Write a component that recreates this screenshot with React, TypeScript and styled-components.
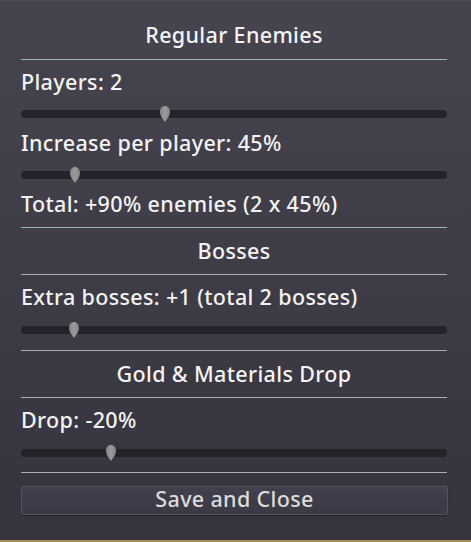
import React, { FunctionComponent } from 'react';
import styled, { createGlobalStyle } from 'styled-components';

const GlobalStyle = createGlobalStyle`
  html, body {
    margin: 0;
    padding: 0;
    background: #a68e63;
  }
  body {
    width: 471px;
    height: 542px;
    overflow: hidden;
    font-family: 'Noto Sans', 'DejaVu Sans', sans-serif;
  }
`;

const Panel = styled.div`
  width: 471px;
  height: 540px;
  box-sizing: border-box;
  padding: 24px 24px 25px 21px;
  display: flex;
  flex-direction: column;
  gap: 13px;
  background: linear-gradient(180deg, #46444f 0%, #3e3c47 50%, #35333d 100%);
  border-top: 1px solid #524f5b;
  color: #f3f3f3;
  font-size: 21.5px;
  font-weight: 500;
  letter-spacing: 0.35px;
`;

const Heading = styled.div`
  height: 22px;
  line-height: 19px;
  text-align: center;
  color: #f4f4f4;
  white-space: nowrap;
`;

const Divider = styled.div`
  height: 1px;
  flex-shrink: 0;
  background: #a3afba;
`;

const Label = styled.div`
  height: 20px;
  line-height: 17px;
  white-space: nowrap;
`;

const SliderRow = styled.div`
  height: 14px;
  display: flex;
  align-items: center;
  padding-top: 3px;
`;

const Track = styled.div`
  position: relative;
  flex: 1;
  height: 8px;
  border-radius: 4px;
  background: #24232a;
`;

const Grabber = styled.svg`
  position: absolute;
  top: -4px;
  width: 10px;
  height: 16px;
  margin-left: -5px;
`;

const SaveButton = styled.button`
  height: 30px;
  margin-right: -1px;
  box-sizing: border-box;
  border: 1px solid #55535f;
  border-radius: 2px;
  background: linear-gradient(180deg, #42404c 0%, #3b3945 100%);
  box-shadow: 0 1px 1px rgba(0, 0, 0, 0.35);
  color: #dcdcdc;
  font-family: 'Noto Sans', 'DejaVu Sans', sans-serif;
  font-size: 21.5px;
  font-weight: 500;
  letter-spacing: 0.35px;
  line-height: 22px;
  padding: 0 0 3px;
  cursor: pointer;
`;

// pos is the thumb place along the track, 0..1
const Slider: FunctionComponent<{ pos: number }> = ({ pos }) => (
  <SliderRow>
    <Track>
      <Grabber
        viewBox="0 0 10 16"
        style={{ left: `calc(5px + ${pos} * (100% - 10px))` }}
      >
        <defs>
          <linearGradient id="grab" x1="0" y1="0" x2="1" y2="0">
            <stop offset="0" stopColor="#858585" />
            <stop offset="0.5" stopColor="#9a9a9a" />
            <stop offset="1" stopColor="#828282" />
          </linearGradient>
        </defs>
        <path
          d="M5 0 C8 0 10 2.5 10 6 C10 10 7 13 5 16 C3 13 0 10 0 6 C0 2.5 2 0 5 0 Z"
          fill="url(#grab)"
        />
      </Grabber>
    </Track>
  </SliderRow>
);

const App: FunctionComponent = () => {
  return (
    <>
      <GlobalStyle />
      <Panel>
        <Heading>Regular Enemies</Heading>
        <Divider />
        <Label>Players: 2</Label>
        <Slider pos={0.335} />
        <Label>Increase per player: 45%</Label>
        <Slider pos={0.118} />
        <Label>Total: +90% enemies (2 x 45%)</Label>
        <Divider />
        <Heading>Bosses</Heading>
        <Divider />
        <Label>Extra bosses: +1 (total 2 bosses)</Label>
        <Slider pos={0.115} />
        <Divider />
        <Heading>Gold &amp; Materials Drop</Heading>
        <Divider />
        <Label>Drop: -20%</Label>
        <Slider pos={0.204} />
        <Divider />
        <SaveButton>Save and Close</SaveButton>
      </Panel>
    </>
  );
};

export default App;
